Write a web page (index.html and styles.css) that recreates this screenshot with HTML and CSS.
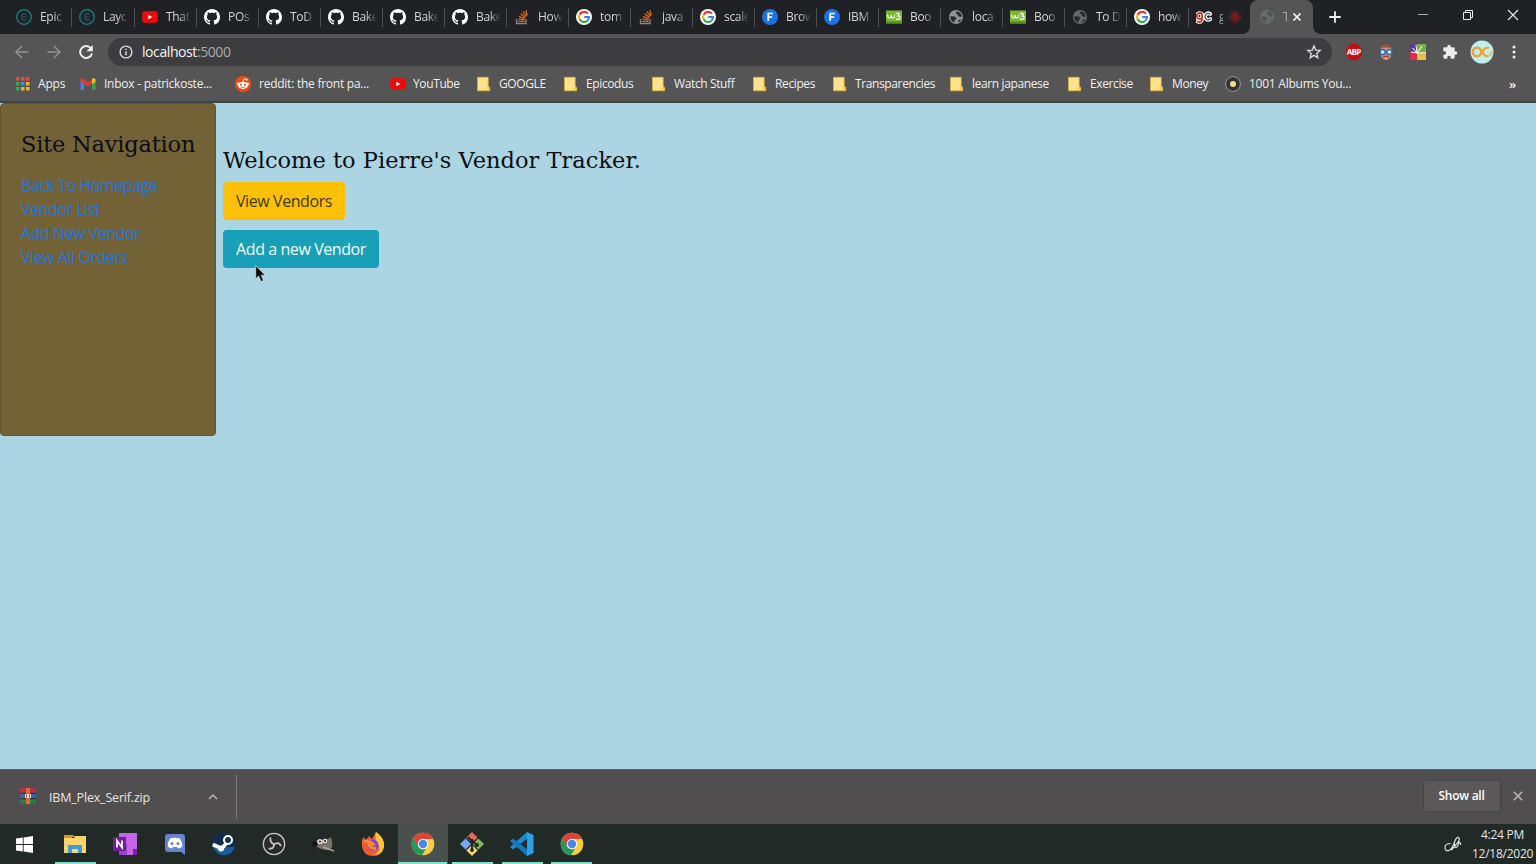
FILE: index.html
```
<!DOCTYPE html>
<html lang="en">
<head>
<meta charset="utf-8">
<title>Vendor Tracker</title>
<link rel="stylesheet" href="styles.css">
</head>
<body>
<svg class="defs" width="0" height="0" aria-hidden="true">
  <symbol id="epi" viewBox="0 0 16 16"><circle cx="8" cy="8" r="7.3" fill="#18272b" stroke="#23848d" stroke-width="1.2"/><path d="M10.5 5H6v6h4.500M6 8h4" fill="none" stroke="#405359" stroke-width="1"/></symbol>
  <symbol id="yt" viewBox="0 0 16 16"><rect x=".3" y="2.300" width="15.400" height="11.500" rx="2" fill="#f00b0b"/><path d="M6.300 5.700v4.600L10.300 8z" fill="#fff"/></symbol>
  <symbol id="gh" viewBox="0 0 16 16"><path fill="#fff" d="M8 0C3.580 0 0 3.580 0 8c0 3.540 2.290 6.530 5.470 7.590.4.070.55-.17.55-.38 0-.19-.01-.82-.01-1.490-2.010.37-2.530-.49-2.690-.94-.09-.23-.48-.94-.82-1.130-.28-.15-.68-.52-.01-.53.63-.01 1.080.58 1.230.82.72 1.210 1.870.87 2.330.66.070-.52.28-.87.510-1.070-1.780-.2-3.640-.89-3.640-3.950 0-.87.310-1.590.82-2.150-.08-.2-.36-1.020.080-2.120 0 0 .67-.21 2.200.82.64-.18 1.320-.27 2-.27s1.360.090 2 .27c1.530-1.040 2.200-.82 2.200-.82.44 1.100.16 1.920.080 2.120.51.560.82 1.270.82 2.150 0 3.070-1.870 3.750-3.650 3.950.29.250.540.730.540 1.480 0 1.070-.01 1.930-.01 2.200 0 .21.15.46.55.38A8 8 0 0 0 16 8c0-4.420-3.580-8-8-8z"/></symbol>
  <symbol id="so" viewBox="0 0 16 16"><path d="M2.500 10v4.500h9.500V10" fill="none" stroke="#8d8783" stroke-width="1.300"/><path d="M4.200 12.300h6.200M4.300 9.900l6.200 .9M5 7.300l5.700 2.300M6.600 4.700l4.800 3.700M9 2.500l3.500 4.800M12 1.200l1.100 5.300" stroke="#d4691f" stroke-width="1.350"/></symbol>
  <symbol id="goo" viewBox="0 0 16 16"><circle cx="8" cy="8" r="8" fill="#fff"/><path d="M12 4.700A5 5 0 0 0 3.600 5.700" fill="none" stroke="#e33e2f" stroke-width="2.100"/><path d="M3.700 5.500a5 5 0 0 0 0 5" fill="none" stroke="#f6b60a" stroke-width="2.100"/><path d="M3.600 10.300a5 5 0 0 0 7.800 1.400" fill="none" stroke="#30a650" stroke-width="2.100"/><path d="M8.200 8H13a5 5 0 0 1-1.600 3.700" fill="none" stroke="#3f80ee" stroke-width="2.100"/></symbol>
  <symbol id="fnt" viewBox="0 0 16 16"><circle cx="8" cy="8" r="8" fill="#1b72e6"/><path d="M6.200 12V4.500h4.800M6.200 8.200h4" fill="none" stroke="#fff" stroke-width="1.700"/></symbol>
  <symbol id="w3" viewBox="0 0 16 16"><path fill="#7ab62f" d="M0 1.500h16v13H0z"/><path fill="#4c8c1e" d="M0 12.500h16v2H0z"/><path d="M1.500 5.500q0 3.500 1.800 3.500T5 6q0 3 1.800 3t1.900-3.500M10 5q1-1.200 2.500-.8 1.800.8-.7 2.700 3.200.3 2 2.600-1.800 1.600-4 0" fill="none" stroke="#fff" stroke-width="1.200"/></symbol>
  <symbol id="globe" viewBox="0 0 16 16"><circle cx="8" cy="8" r="7" fill="currentColor"/><path d="M2.300 7.200L7 7.500l1.600 2.300-2.200 1.500.3 2.300Q2 12 2.300 7.200M9 2.300L7.500 4.200l2 1.100.5 2 3.500.6q.5-4.200-4.500-5.600M10.500 11l3-.8q-1.200 2.300-3.400 3z" fill="var(--sea, #262829)"/></symbol>
  <symbol id="gc" viewBox="0 0 16 16"><g fill="none" stroke-linecap="round"><path d="M6 5a3 3 0 1 0 0 4V4.500V11q-1 3-4.500 1.500M14.200 5a3.200 3.200 0 1 0 .2 5" stroke="#fff" stroke-width="3.700"/><path d="M6 5a3 3 0 1 0 0 4V4.500V11q-1 3-4.500 1.500" stroke="#c33728" stroke-width="1.800"/><path d="M14.200 5a3.200 3.200 0 1 0 .2 5" stroke="#413b3b" stroke-width="1.100"/></g></symbol>
  <symbol id="folder" viewBox="0 0 16 16"><path d="M1.500 1.300h10.700v9.500l1.500 1v3H1.500z" fill="#fce28a" stroke="#d9b040" stroke-width=".8"/><path d="M11.500 10.500h2v4h-2.500z" fill="#f6c748"/></symbol>
  <symbol id="chrome" viewBox="0 0 24 24"><circle cx="12" cy="12" r="11.300" fill="#f9ce45"/><path d="M2.200 6.300A11.300 11.300 0 0 1 21.800 6.300L22 7H12L6.500 14z" fill="#dc4437"/><path d="M2.200 6.300L7.500 15l4.500 2.500 3-.7-4 6.400A11.300 11.300 0 0 1 2.200 6.300" fill="#24995a"/><circle cx="12" cy="12" r="5.200" fill="#fff"/><circle cx="12" cy="12" r="4.200" fill="#4688ee"/></symbol>
</svg>

<header class="tabs">
  <div class="tab wide"><svg><use href="#epi"/></svg><span>Epic</span></div>
  <div class="tab wide"><svg><use href="#epi"/></svg><span>Layc</span></div>
  <div class="tab"><svg><use href="#yt"/></svg><span>That</span></div>
  <div class="tab"><svg><use href="#gh"/></svg><span>POs</span></div>
  <div class="tab"><svg><use href="#gh"/></svg><span>ToD</span></div>
  <div class="tab"><svg><use href="#gh"/></svg><span>Bake</span></div>
  <div class="tab"><svg><use href="#gh"/></svg><span>Bake</span></div>
  <div class="tab"><svg><use href="#gh"/></svg><span>Bake</span></div>
  <div class="tab"><svg><use href="#so"/></svg><span>How</span></div>
  <div class="tab"><svg><use href="#goo"/></svg><span>tom</span></div>
  <div class="tab"><svg><use href="#so"/></svg><span>java</span></div>
  <div class="tab"><svg><use href="#goo"/></svg><span>scale</span></div>
  <div class="tab"><svg><use href="#fnt"/></svg><span>Brow</span></div>
  <div class="tab"><svg><use href="#fnt"/></svg><span>IBM</span></div>
  <div class="tab"><svg><use href="#w3"/></svg><span>Boo</span></div>
  <div class="tab"><svg class="grey"><use href="#globe"/></svg><span>loca</span></div>
  <div class="tab"><svg><use href="#w3"/></svg><span>Boo</span></div>
  <div class="tab"><svg class="dim"><use href="#globe"/></svg><span>To D</span></div>
  <div class="tab"><svg><use href="#goo"/></svg><span>how</span></div>
  <div class="tab last"><svg><use href="#gc"/></svg><span class="tiny">g</span><svg class="rec" viewBox="0 0 14 14"><circle cx="7" cy="7" r="5.700" fill="none" stroke="#5e2020"/><circle cx="7" cy="7" r="4.300" fill="#741c1c"/></svg></div>
  <div class="tab active"><svg class="faint"><use href="#globe"/></svg><span class="tiny">T</span><svg class="close" viewBox="0 0 10 10"><path d="M1.500 1.500l7 7m0-7l-7 7" stroke="#fff" stroke-width="1.700"/></svg></div>
  <svg class="plus" viewBox="0 0 12 12"><path d="M6 .3v11.400M.3 6h11.400" stroke="#eee" stroke-width="1.800"/></svg>
  <div class="win">
    <svg viewBox="0 0 12 12"><path d="M1 5.500h10" stroke="#aaa"/></svg>
    <svg viewBox="0 0 12 12"><path d="M1.500 3.500h7v7h-7zM3.500 3V1.500h7v7H9" fill="none" stroke="#eee"/></svg>
    <svg viewBox="0 0 12 12"><path d="M1 1l10 10m0-10L1 11" stroke="#eee" stroke-width="1.100"/></svg>
  </div>
</header>

<div class="toolbar">
  <svg class="nav" viewBox="0 0 16 16"><path d="M14.500 8H2.500M8 2L2 8l6 6" fill="none" stroke="#929292" stroke-width="1.500"/></svg>
  <svg class="nav" viewBox="0 0 16 16"><path d="M1.500 8h12M8 2l6 6-6 6" fill="none" stroke="#929292" stroke-width="1.500"/></svg>
  <svg class="nav" viewBox="0 0 16 16"><path d="M12.800 4.200A6 6 0 1 0 14 9.500" fill="none" stroke="#f2f2f2" stroke-width="1.900"/><path d="M14.800 1v6.300H8.500z" fill="#f2f2f2"/></svg>
  <div class="omni">
    <svg class="info" viewBox="0 0 14 14"><circle cx="7" cy="7" r="5.900" fill="none" stroke="#ddd" stroke-width="1.400"/><path d="M7 6.200v4M7 3.700v1.400" stroke="#ddd" stroke-width="1.500"/></svg>
    <span class="url">localhost<i>:5000</i></span>
    <svg class="star" viewBox="0 0 16 16"><path d="M8 1.800l1.700 4.300 4.500.3-3.400 3 1 4.500L8 11.400l-3.800 2.500 1-4.500-3.400-3 4.500-.3z" fill="none" stroke="#ddd" stroke-width="1.300"/></svg>
  </div>
  <div class="ext">
    <svg viewBox="0 0 16 16"><path d="M5 0h6l5 5v6l-5 5H5l-5-5V5z" fill="#c70d0d"/><text x="8" y="10.800" text-anchor="middle" textLength="14.500" class="abp">ABP</text></svg>
    <svg viewBox="0 0 16 16"><path d="M2 6q0-5.500 6-5.500T14 6l-1 6q-2 4-5 4t-5-4z" fill="#d59a88"/><path d="M1.500 6q0-6 6.500-6t6.500 6l-3-2.500h-7z" fill="#87533a"/><circle cx="4.600" cy="8" r="2.600" fill="#d8eafa" stroke="#2967b5" stroke-width="1.500"/><circle cx="11.400" cy="8" r="2.600" fill="#d8eafa" stroke="#2967b5" stroke-width="1.500"/><path d="M5 13q3-1.500 6 0" stroke="#af352f" stroke-width="1.400" fill="none"/></svg>
    <svg viewBox="0 0 16 16"><path fill="#5c3a91" d="M0 0h7v8H0z"/><path fill="#73b443" d="M7 0h9v9H7z"/><path fill="#d92f4a" d="M0 8h7v8H0z"/><path fill="#e6c049" d="M7 9h9v7H7z"/><path d="M7 9L2.500 4M7 9L6 1M7 9l5-7M7 9l9-.5M7 9L1 8" stroke="#f5f2e8" stroke-width="1.100"/></svg>
    <svg viewBox="0 0 24 24"><path fill="#eee" d="M20.500 11H19V7a2 2 0 0 0-2-2h-4V3.500a2.500 2.500 0 0 0-5 0V5H4a2 2 0 0 0-2 2v3.800h1.500a2.700 2.700 0 0 1 0 5.400H2V20a2 2 0 0 0 2 2h3.800v-1.500a2.700 2.700 0 0 1 5.400 0V22H17a2 2 0 0 0 2-2v-4h1.500a2.500 2.500 0 0 0 0-5z"/></svg>
    <svg class="avatar" viewBox="0 0 24 24"><circle cx="12" cy="12" r="11.500" fill="#bfeef2"/><circle cx="7" cy="12" r="4.300" fill="none" stroke="#eda52e" stroke-width="2.400"/><path d="M10.500 9.500L14 14.500q2 2.500 4.500 1.500M10.500 14.500L14 9.500q2-2.500 5-1.500" fill="none" stroke="#eda52e" stroke-width="2.200"/><path d="M19.500 15.500q2.500-1.500 2.300-5" fill="none" stroke="#eda52e" stroke-width="2.200" stroke-dasharray="1.600 1.200"/></svg>
    <svg viewBox="0 0 16 16"><g fill="#eee"><circle cx="8" cy="3" r="1.500"/><circle cx="8" cy="8" r="1.500"/><circle cx="8" cy="13" r="1.500"/></g></svg>
  </div>
</div>

<nav class="marks">
  <a><svg viewBox="0 0 16 16"><path fill="#e64b3c" d="M1 1h3.500v3.500H1zM6 1h3.500v3.500H6zM11 1h3.500v3.500H11z"/><path fill="#3ba45b" d="M1 6h3.500v3.500H1zM1 11h3.500v3.500H1z"/><path fill="#438be5" d="M6 6h3.500v3.500H6z"/><path fill="#e9b532" d="M11 6h3.500v3.500H11zM6 11h3.500v3.500H6zM11 11h3.500v3.500H11z"/></svg><span class="s0">Apps</span></a>
  <a class="n"><svg viewBox="0 0 16 16"><path fill="#4285ee" d="M.5 5h3.500v9H.5z"/><path fill="#35a354" d="M12 5h3.500v9H12z"/><path fill="#d93d30" d="M.5 3.500L2.500 2 8 6.500 12 3v4.500l-4 3.300-7.500-5.500z"/><path fill="#f2bb17" d="M12 3l2-1 1.500 1.500V6L12 8z"/></svg><span>Inbox - patrickoste...</span></a>
  <a class="n"><svg viewBox="0 0 16 16"><circle cx="8" cy="8" r="8" fill="#f44a12"/><ellipse cx="8" cy="9.300" rx="5" ry="3.600" fill="#fff"/><circle cx="3.200" cy="7.800" r="1.300" fill="#fff"/><circle cx="12.800" cy="7.800" r="1.300" fill="#fff"/><path d="M8 6l.8-3 2.600.6" fill="none" stroke="#fff" stroke-width=".9"/><circle cx="11.500" cy="3.600" r="1.100" fill="#fff"/><circle cx="6" cy="8.700" r="1" fill="#f44a12"/><circle cx="10" cy="8.700" r="1" fill="#f44a12"/><path d="M5.800 10.900q2.200 1.500 4.400 0" fill="none" stroke="#f44a12" stroke-width=".8"/></svg><span>reddit: the front pa...</span></a>
  <a><svg><use href="#yt"/></svg><span>YouTube</span></a>
  <a><svg><use href="#folder"/></svg><span>GOOGLE</span></a>
  <a><svg><use href="#folder"/></svg><span>Epicodus</span></a>
  <a><svg><use href="#folder"/></svg><span>Watch Stuff</span></a>
  <a><svg><use href="#folder"/></svg><span>Recipes</span></a>
  <a><svg><use href="#folder"/></svg><span>Transparencies</span></a>
  <a><svg><use href="#folder"/></svg><span>learn japanese</span></a>
  <a><svg><use href="#folder"/></svg><span>Exercise</span></a>
  <a><svg><use href="#folder"/></svg><span>Money</span></a>
  <a class="n albums"><svg viewBox="0 0 16 16"><circle cx="8" cy="8" r="7.400" fill="#333" stroke="#999"/><circle cx="8" cy="8" r="3" fill="#f4dd85"/></svg><span>1001 Albums You...</span></a>
  <b>»</b>
</nav>

<main class="page">
  <aside class="side">
    <h2>Site Navigation</h2>
    <a>Back To Homepage</a>
    <a>Vendor List</a>
    <a>Add New Vendor</a>
    <a>View All Orders</a>
  </aside>
  <section class="content">
    <h1>Welcome to Pierre's Vendor Tracker.</h1>
    <button class="btn warn">View Vendors</button>
    <button class="btn teal">Add a new Vendor</button>
  </section>
  <svg class="cursor" viewBox="0 0 12 18"><path d="M.7.7v13l3-2.700 2.200 5.500 2.600-1-2.200-5.300h4z" fill="#080a0c" stroke="#d8e7ec" stroke-width=".7"/></svg>
</main>

<div class="downloads">
  <div class="file">
    <svg class="rar" viewBox="0 0 16 16"><path fill="#b92e50" d="M0 0h16v5H0z"/><path fill="#3a65a8" d="M0 5.500h16v5H0z"/><path fill="#28814b" d="M0 11h16v4.500H0z"/><path fill="#1c2c34" d="M0 4.700h16v1H0zM0 10.200h16v1H0z"/><path fill="#df6a2c" d="M6 0h4v16H6z"/><path fill="#e7e0d2" d="M5 6h6v4H5z"/><path d="M6.500 6.500v3M9.500 6.500v3M2 0v16M4 0v4" stroke="#9c4a35" stroke-width="1"/></svg>
    <span>IBM_Plex_Serif.zip</span>
    <svg class="chev" viewBox="0 0 10 8"><path d="M1 6L5 2l4 4" fill="none" stroke="#bbb" stroke-width="1.400"/></svg>
  </div>
  <button class="show">Show all</button>
  <svg class="dx" viewBox="0 0 10 10"><path d="M.8.8l8.400 8.400m0-8.400L.8 9.200" stroke="#bbb" stroke-width="1.500"/></svg>
</div>

<footer class="taskbar">
  <div class="task"><svg class="start" viewBox="0 0 16 16"><path fill="#fff" d="M0 2.300l6.400-.9v6.200H0zM7.200 1.300L16 0v7.600H7.200zM0 8.400h6.400v6.200L0 13.700zM7.200 8.400H16V16l-8.800-1.300z"/></svg></div>
  <div class="task run"><svg viewBox="0 0 24 24"><path fill="#d69a19" d="M1 3h9l2 2h-3v4H1z"/><path fill="#fbd56b" d="M1 6h10l1-2h11v17H1z"/><path fill="#3e9cda" d="M5 13h14v8h-4v-4H9v4H5z"/></svg></div>
  <div class="task"><svg viewBox="0 0 24 24"><path fill="#c266e6" d="M6 1h18v22H6z"/><path fill="#9a45c6" d="M6 12h8v11H6z"/><path fill="#7a22a3" d="M20 17h4v6h-4z"/><path fill="#761b9c" d="M0 5h13v14H0z"/><path d="M4 15.500v-7l5 7v-7" fill="none" stroke="#fff" stroke-width="1.800"/></svg></div>
  <div class="task"><svg viewBox="0 0 24 24"><path fill="#6584cd" d="M5 2h14q3 0 3 3v18l-4-3H5q-3 0-3-3V5q0-3 3-3"/><path fill="#fff" d="M7 6.500q5-1.500 10 0 2.500 4 2.300 8-2 2-4.300 2l-1-1.500h-4l-1 1.500q-2.300 0-4.300-2Q4.500 10.500 7 6.500"/><circle cx="9" cy="11.500" r="1.500" fill="#6584cd"/><circle cx="15" cy="11.500" r="1.500" fill="#6584cd"/></svg></div>
  <div class="task"><svg viewBox="0 0 24 24"><circle cx="12" cy="12" r="11.500" fill="#102d50"/><path fill="#195e9c" d="M1 15h22a11.500 11.500 0 0 1-22 0"/><path d="M.8 12.500l9 4 6-7" fill="none" stroke="#fff" stroke-width="3.600"/><circle cx="16" cy="8" r="4" fill="#183451" stroke="#fff" stroke-width="2"/><circle cx="9" cy="16.500" r="3" fill="#fff"/></svg></div>
  <div class="task"><svg viewBox="0 0 24 24"><circle cx="12" cy="12" r="10.700" fill="#282b2b" stroke="#c3c6c5" stroke-width="1.300"/><path d="M12 12.500Q7.500 10 8.500 5.500M12 12.500q4.500-3.500 7 1.500M12 12.500q0 5-5.500 4" fill="none" stroke="#c3c6c5" stroke-width="1.800"/></svg></div>
  <div class="task"><svg viewBox="0 0 24 24"><path fill="#777269" d="M5 8q9 1 14-3l1 5q2 8-6 8-8-1-11-5z"/><circle cx="3" cy="12" r="2.600" fill="#121313"/><circle cx="8" cy="9.500" r="2.600" fill="#e3e2dc"/><circle cx="13" cy="9" r="2.300" fill="#e3e2dc"/><circle cx="8" cy="9.500" r="1" fill="#111"/><circle cx="13" cy="9" r="1" fill="#111"/><path d="M11 15l11 4" stroke="#aaa59c" stroke-width="1.500"/></svg></div>
  <div class="task"><svg viewBox="0 0 24 24"><path fill="#ee5a34" d="M2 5l3 3 3-4 3 3 4-7q9 6 8 15-2 9-11 9T1 15q-1-5 1-10"/><path fill="#fac53b" d="M15 0q9 6 8 15-2 8-10 8 8-5 4-11-4-5-2-12"/><circle cx="12" cy="13" r="5.500" fill="#8446cb"/><path d="M3 9q6 0 9 3-3 1-4 0 1 5 7 4" fill="none" stroke="#f58935" stroke-width="3"/></svg></div>
  <div class="task run on"><svg><use href="#chrome"/></svg></div>
  <div class="task run"><svg viewBox="0 0 24 24"><path fill="#e4685d" d="M12 0l5.600 5.600L12 11 6.400 5.600z"/><path fill="#79a9ed" d="M5.600 6.400L11 12l-5.400 5.600L0 12z"/><path fill="#82b856" d="M18.400 6.400L24 12l-5.600 5.600L13 12z"/><path fill="#efd479" d="M12 13l5.600 5.400L12 24l-5.600-5.600z"/><path d="M8 5l4 4v9M12 9l5 4" fill="none" stroke="#202624" stroke-width="1.800"/><circle cx="12" cy="18" r="1.900" fill="#202624"/><circle cx="17" cy="13" r="1.900" fill="#202624"/><circle cx="12" cy="9" r="1.900" fill="#202624"/></svg></div>
  <div class="task run"><svg viewBox="0 0 24 24"><path fill="#168bd1" d="M17 0L0 15l3 2.500L18 6z"/><path fill="#1278bd" d="M0 9l3-2.500L18 18l-1 6z"/><path fill="#2ba0e5" d="M17 0l6.500 3v18L17 24z"/></svg></div>
  <div class="task run"><svg><use href="#chrome"/></svg></div>
  <div class="tray">
    <svg viewBox="0 0 18 18"><path d="M6.500 8.500Q1 8.500 1 12.500t4 3q3-1 5.500-8.500 2-5.500 4-4.500t-1 5.500l-6 7M10.500 7q-.5 6 1.500 5.500t2.500-4 2.500 1.500" fill="none" stroke="#ddd" stroke-width="1.200"/></svg>
    <div class="clock"><span class="time">4:24 PM</span><span class="date">12/18/2020</span></div>
  </div>
</footer>
</body>
</html>
```
FILE: styles.css
```
* { box-sizing: border-box; }
body { margin: 0; width: 1536px; height: 864px; overflow: hidden; display: flex; flex-direction: column; font-family: "Open Sans", "Noto Sans", sans-serif; font-size: 12px; color: #e4e4e4; background: #555; }
svg { display: block; flex: none; width: 16px; height: 16px; }
.defs { position: absolute; width: 0; height: 0; }
button { font: inherit; }

.tabs { height: 34px; display: flex; align-items: center; background: #202124; padding-left: 9px; }
.tab { width: 62px; height: 34px; padding: 0 7px; display: flex; align-items: center; gap: 8px; color: #d2d4d5; background: linear-gradient(#4d5052, #4d5052) right 8px / 1px 19px no-repeat; flex: none; }
.tab.wide { width: 63px; }
.tab span { width: 25px; flex: none; overflow: hidden; white-space: nowrap; letter-spacing: -.3px; padding-bottom: 1px; -webkit-mask-image: linear-gradient(90deg, #000 55%, transparent); mask-image: linear-gradient(90deg, #000 55%, transparent); }
.tab span.tiny { width: 4px; -webkit-mask-image: none; mask-image: none; opacity: .7; }
.tab.last { background: none; gap: 7px; width: 61px; }
.tab .rec { width: 14px; height: 14px; margin-left: -2px; }
.tab.active { position: relative; width: 63px; background: #555; border-radius: 8px 8px 0 0; padding-left: 9px; }
.tab.active::before, .tab.active::after { content: ""; position: absolute; bottom: 0; width: 7px; height: 7px; }
.tab.active::before { left: -7px; background: radial-gradient(circle at 0 0, transparent 6.500px, #555 7px); }
.tab.active::after { right: -7px; background: radial-gradient(circle at 100% 0, transparent 6.500px, #555 7px); }
.tab .close { width: 10px; height: 10px; margin-left: -3px; }
.grey { color: #909394; }
.dim { color: #66696a; }
.faint { color: #666b6b; --sea: #505252; }
.plus { width: 12px; height: 12px; margin-left: 16px; }
.win { margin-left: auto; margin-right: 17px; display: flex; gap: 33px; padding-bottom: 5px; }
.win svg { width: 12px; height: 12px; }

.toolbar { height: 34px; display: flex; align-items: center; background: #555; padding: 1px 14px 0; }
.toolbar .nav { margin-right: 16px; }
.omni { width: 1224px; height: 28px; margin-left: -2px; border-radius: 14px; background: #3d3d3f; display: flex; align-items: center; padding: 0 10px 0 11px; }
.info { width: 14px; height: 14px; }
.url { font-size: 14px; color: #f4f4f4; margin-left: 9px; letter-spacing: -.42px; }
.url i { font-style: normal; color: #aaa; }
.star { margin-left: auto; }
.ext { display: flex; align-items: center; gap: 16px; margin-left: 14px; }
.ext .avatar { width: 24px; height: 24px; margin: 0 -4px; }
.abp { font: bold 8px "Open Sans", sans-serif; fill: #fff; }

.marks { height: 35px; display: grid; grid-template-columns: 65px 155px 155px 86px 87px 88px 101px 80px 117px 118px 82px 75px 285px auto; align-items: center; padding: 0 0 2px 15px; background: #555; border-bottom: 2px solid #3d4649; }
.marks a { display: flex; align-items: center; gap: 7px; white-space: nowrap; color: #efefef; letter-spacing: -.38px; }
.marks a.n { letter-spacing: -.25px; gap: 8px; }
.marks a.albums { padding-left: 1px; }
.marks .s0 { letter-spacing: -.2px; }
.marks b { font-size: 13px; font-weight: 600; color: #eee; }

.page { position: relative; height: 666px; display: flex; align-items: flex-start; background: #abd5e2; }
.side { width: 216px; height: 333px; border: 1px solid #65562b; border-radius: 4px; background: #726235; padding: 25px 20px; display: flex; flex-direction: column; }
h1, h2 { font-family: "DejaVu Serif", serif; font-weight: 400; font-size: 22.500px; line-height: 30px; margin: 0; color: #0c0d14; white-space: nowrap; letter-spacing: .03px; }
.side h2 { margin-bottom: 14px; letter-spacing: -.2px; }
.side a { font-size: 16px; line-height: 24px; color: #2874dc; white-space: nowrap; letter-spacing: -.46px; }
.content { padding: 42px 0 0 7px; display: flex; flex-direction: column; align-items: flex-start; }
.content h1 { margin-bottom: 7px; }
.btn { height: 38px; border: 0; border-radius: 4px; padding: 0; font-size: 16px; white-space: nowrap; letter-spacing: -.42px; }
.warn { width: 122px; background: #fdc008; color: #443813; margin-bottom: 10px; }
.teal { width: 156px; background: #17a0b7; color: #f5fcfd; }
.cursor { position: absolute; left: 255px; top: 162px; width: 12px; height: 18px; }

.downloads { height: 55px; display: flex; align-items: center; background: #504e4f; border-top: 1px solid #626365; padding: 0 13px 0 0; }
.file { width: 237px; height: 44px; display: flex; align-items: center; border-right: 1px solid #777; padding: 0 18px 0 20px; font-size: 12.500px; color: #e8e6e2; letter-spacing: -.18px; }
.rar { margin-right: 13px; margin-bottom: 3px; }
.chev { width: 10px; height: 8px; margin-left: auto; }
.show { width: 78px; height: 32px; margin-left: auto; background: #5a5859; border: 1px solid #444748; border-radius: 4px; color: #fff; font-size: 12px; font-weight: 600; padding: 0 1px 2px 0; letter-spacing: -.25px; margin-bottom: 2px; }
.dx { width: 10px; height: 10px; margin-left: 12px; margin-bottom: 2px; }

.taskbar { height: 40px; display: flex; background: #212a27; }
.task { width: 49.650px; height: 40px; display: flex; align-items: center; justify-content: center; flex: none; }
.task:first-child { width: 50.500px; padding-right: 2px; }
.task svg { width: 24px; height: 24px; }
.task svg.start { width: 17px; height: 17px; }
.run { background: linear-gradient(#82e0cb, #82e0cb) center bottom / 41px 2px no-repeat; }
.run.on { background: linear-gradient(#82e0cb, #82e0cb) center bottom / 49px 2px no-repeat #4a504e; }
.tray { margin-left: auto; display: flex; align-items: center; gap: 10px; padding-right: 3px; }
.tray svg { width: 18px; height: 18px; }
.clock { display: flex; flex-direction: column; align-items: center; line-height: 18.500px; padding-top: 1px; width: 61px; letter-spacing: -.25px; white-space: nowrap; }
```
